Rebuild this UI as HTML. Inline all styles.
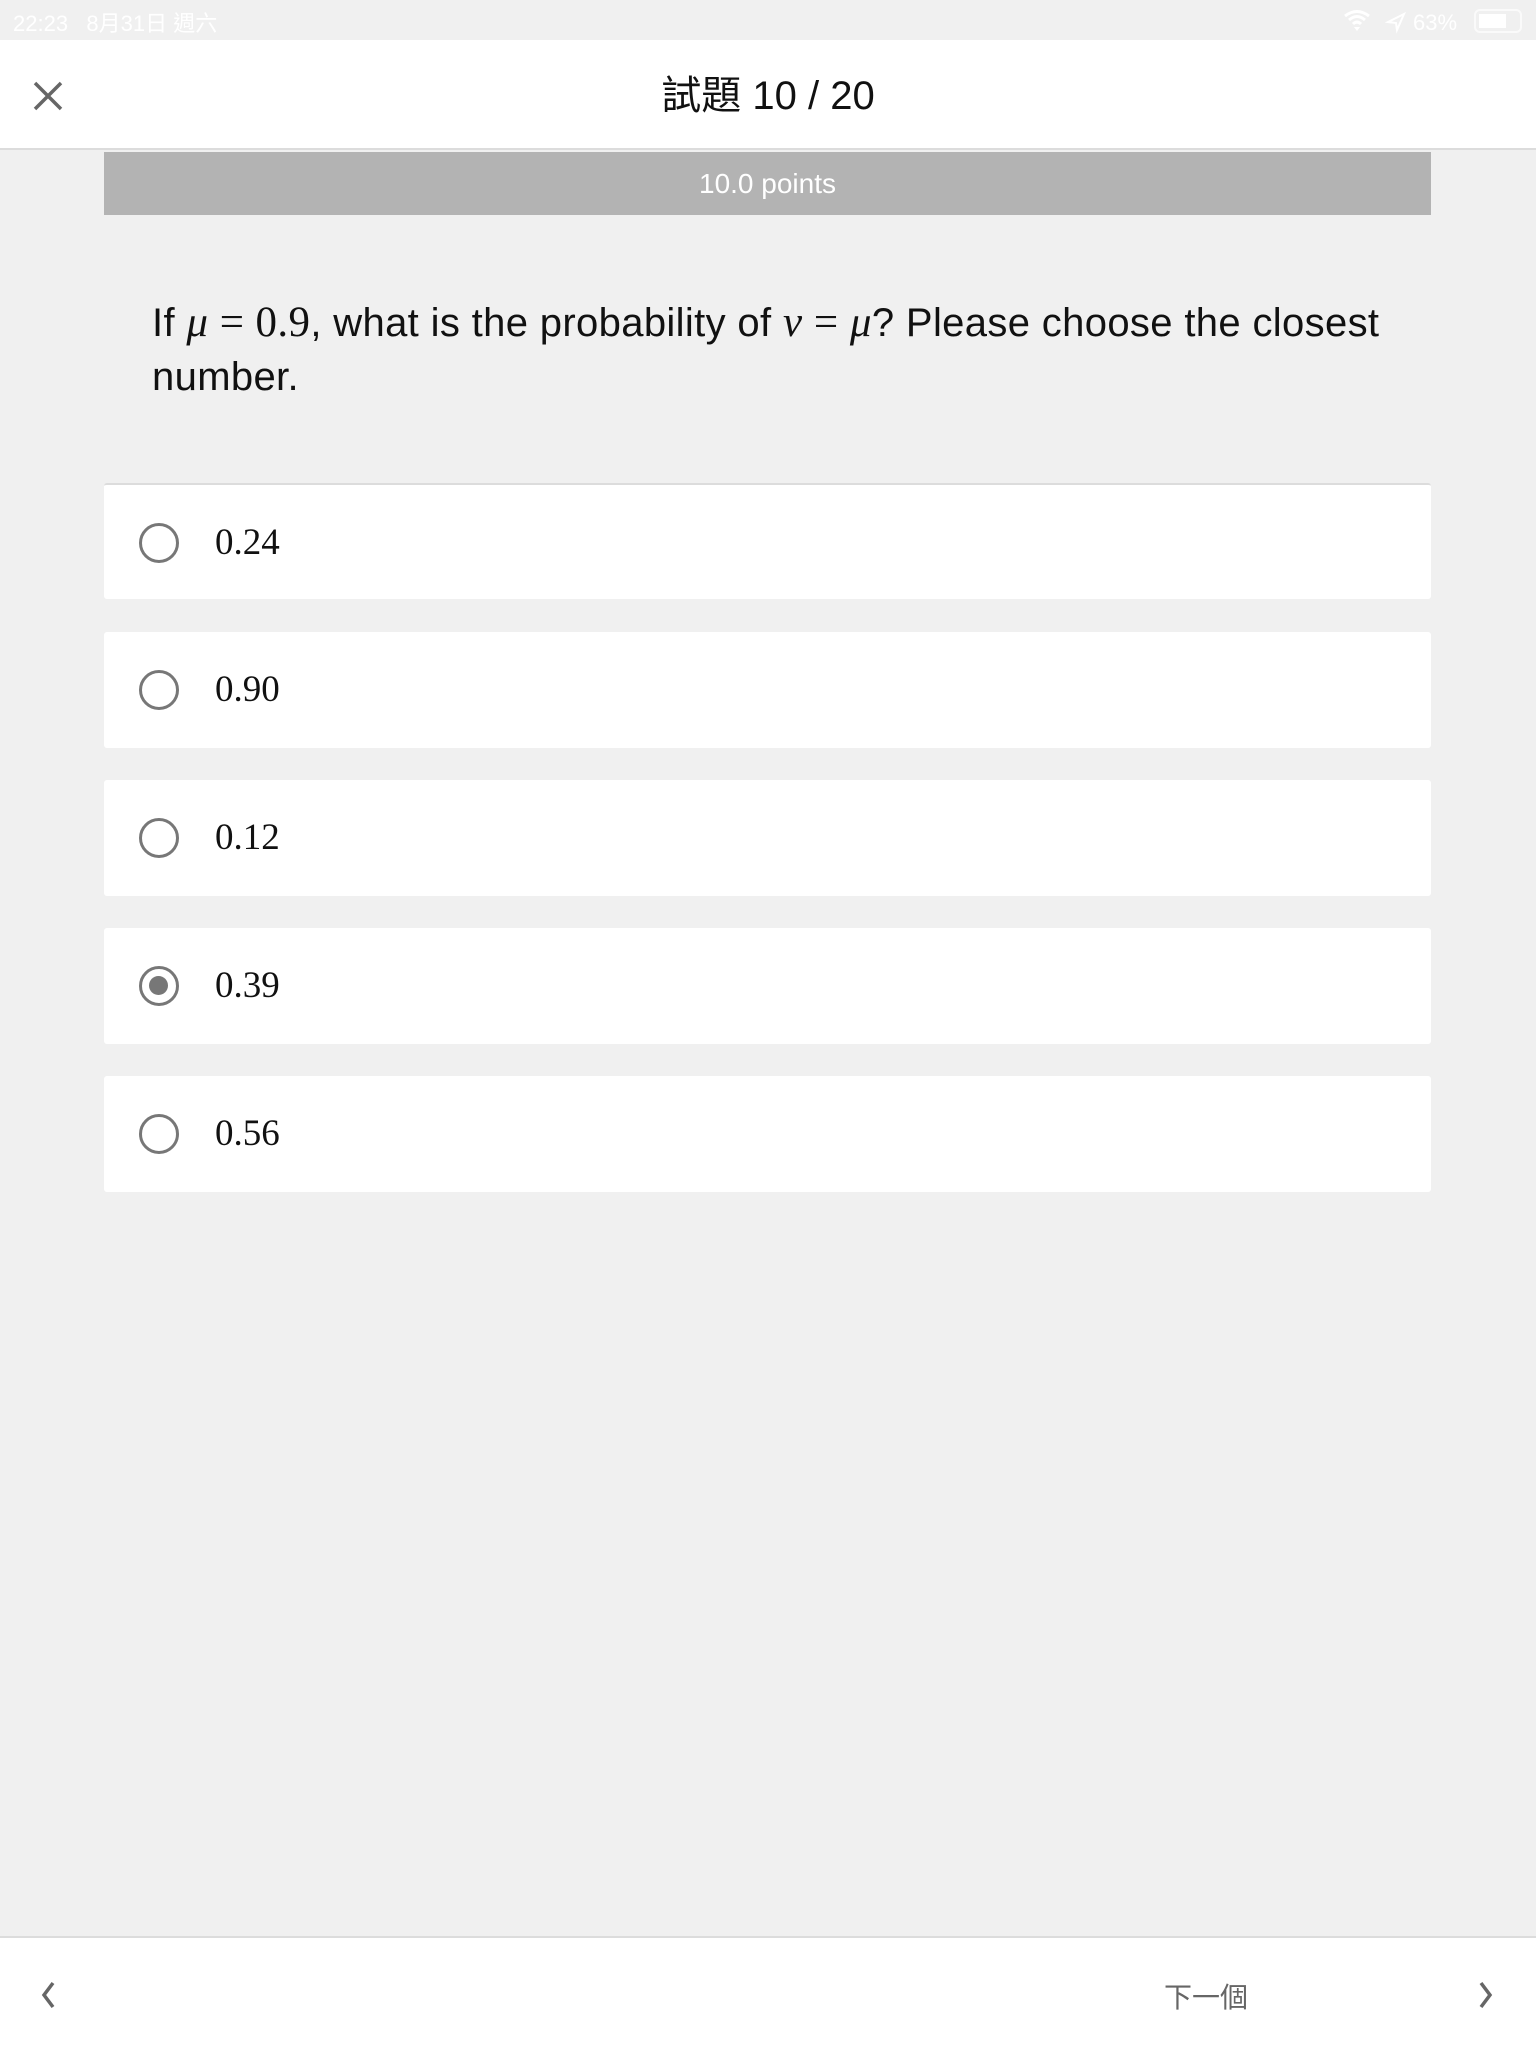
<!DOCTYPE html>
<html><head><meta charset="utf-8"><style>
*{margin:0;padding:0;box-sizing:border-box}
body{width:1536px;height:2048px;background:#f0f0f0;position:relative;overflow:hidden;font-family:"Liberation Sans","Noto Sans CJK TC",sans-serif}
.abs{position:absolute}
.status{left:0;top:0;width:1536px;height:40px;color:#fff;font-size:22px}
.header{left:0;top:40px;width:1536px;height:110px;background:#fff;border-bottom:2px solid #dcdcdc}
.title{left:0;width:1536px;top:35px;text-align:center;font-size:40px;color:#111;line-height:42px}
.points{left:104px;top:152px;width:1327px;height:63px;background:#b3b3b3;color:#fff;text-align:center;font-size:28px;line-height:63px}
.q{left:152px;top:296px;width:1290px;font-size:40px;line-height:54px;color:#111;letter-spacing:0.35px}
.m{font-family:"Liberation Serif",serif;font-size:43px}
.opt{left:104px;width:1327px;height:116px;background:#fff;border-radius:3px}
.rad{position:absolute;left:35px;top:38px;width:40px;height:40px;border:3.5px solid #777;border-radius:50%}
.rad.sel::after{content:"";position:absolute;left:7px;top:7px;width:19px;height:19px;border-radius:50%;background:#777}
.ot{position:absolute;left:111px;top:0;line-height:116px;font-family:"Liberation Serif",serif;font-size:37px;color:#111}
.footer{left:0;top:1936px;width:1536px;height:112px;background:#fff;border-top:2px solid #dcdcdc}
</style></head><body>
<div class="abs status"><span class="abs" style="left:13px;top:6px">22:23&nbsp;&nbsp;&nbsp;8月31日 週六</span>
<svg class="abs" style="left:1342px;top:8px" width="200" height="26" viewBox="0 0 200 26">
<path d="M3 8 Q15 -1 27 8 M7 12 Q15 5 23 12 M11 16 Q15 12 19 16" stroke="#fff" stroke-width="3" fill="none"/><path d="M12 19 L15 23 L18 19Z" fill="#fff"/>
<path d="M46 14 L62 6 L55 22 L54 15Z" stroke="#fff" stroke-width="2" fill="none"/>
<text x="71" y="22" fill="#fff" font-size="22" font-family="Liberation Sans">63%</text>
<rect x="133" y="2" width="46" height="22" rx="5" stroke="#fafafa" stroke-width="2" fill="none"/><rect x="137" y="6" width="27" height="14" fill="#fff"/>
</svg></div>
<div class="abs header">
<svg class="abs" style="left:32px;top:40px" width="32" height="32" viewBox="0 0 32 32"><path d="M3 3 L29 29 M29 3 L3 29" stroke="#666" stroke-width="3.5"/></svg>
<div class="abs title">試題 10 / 20</div>
</div>
<div class="abs points">10.0 points</div>
<div class="abs q">If <i class="m">μ</i> <span class="m">= 0.9</span>, what is the probability of <i class="m">ν</i> <span class="m">=</span> <i class="m">μ</i>? Please choose the closest number.</div>
<div class="abs opt" style="top:483px;border-top:2px solid #dcdcdc"><div class="rad"></div><div class="ot">0.24</div></div>
<div class="abs opt" style="top:632px"><div class="rad"></div><div class="ot">0.90</div></div>
<div class="abs opt" style="top:780px"><div class="rad"></div><div class="ot">0.12</div></div>
<div class="abs opt" style="top:928px"><div class="rad sel"></div><div class="ot">0.39</div></div>
<div class="abs opt" style="top:1076px"><div class="rad"></div><div class="ot">0.56</div></div>
<div class="abs footer">
<svg class="abs" style="left:38px;top:42px" width="20" height="30" viewBox="0 0 20 30"><path d="M15 3 L6 15 L15 27" stroke="#666" stroke-width="3.5" fill="none"/></svg>
<div class="abs" style="left:1164px;top:38px;font-size:28px;color:#666">下一個</div>
<svg class="abs" style="left:1476px;top:42px" width="20" height="30" viewBox="0 0 20 30"><path d="M5 3 L14 15 L5 27" stroke="#666" stroke-width="3.5" fill="none"/></svg>
</div>
</body></html>
